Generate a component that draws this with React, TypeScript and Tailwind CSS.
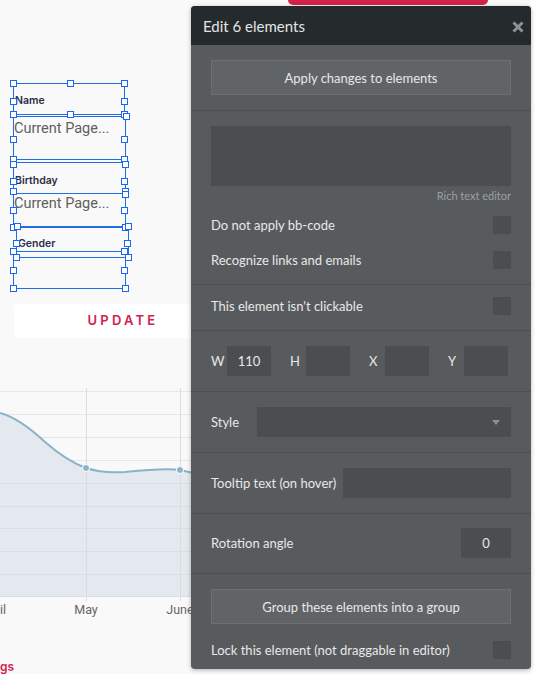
import React from 'react';

const handles: [number, number][] = [
  [13, 83], [70, 83], [124, 83],
  [13, 101], [124, 101],
  [13, 114], [70, 114], [124, 114], [126, 116],
  [13, 139], [124, 139],
  [13, 159], [124, 159], [13, 164], [125, 164],
  [13, 181], [124, 181],
  [13, 191], [125, 191], [125, 194],
  [13, 210], [124, 210],
  [13, 227], [125, 227], [17, 226], [128, 226],
  [16, 243], [127, 243],
  [13, 251], [124, 251], [16, 257], [128, 257],
  [13, 270], [124, 270],
  [13, 288], [125, 288],
];

const boxes: [number, number, number, number][] = [
  [13, 83, 124, 114],
  [13, 116, 125, 159],
  [13, 162, 125, 193],
  [13, 193, 125, 227],
  [16, 226, 128, 257],
  [13, 251, 125, 288],
];

const gridY = [391, 414, 437, 460, 483, 506, 528, 551, 574];

function Check() {
  return <div className="w-[18px] h-[18px] bg-[#4a4e51] shrink-0" />;
}

function Field({ className = '', children }: { className?: string; children?: React.ReactNode }) {
  return (
    <div className={`h-[30px] bg-[#4a4e51] flex items-center justify-center text-[13px] text-[#e8e8e8] ${className}`}>
      {children}
    </div>
  );
}

function EditPanel() {
  const section = 'px-5 border-b border-[#4c5053]';
  return (
    <div className="absolute left-[191px] top-[6px] w-[340px] h-[663px] rounded-[4px] bg-[#575b5e] shadow-[0_1px_4px_rgba(0,0,0,0.3)] overflow-hidden font-['Lato',sans-serif] text-[13px] leading-[18px] text-[#e8e8e8]">
      <div className="h-[39px] bg-[#252a2d] flex items-center justify-between pl-3 pr-[7px]">
        <span className="text-[15px] text-[#e4e4e4]">Edit 6 elements</span>
        <svg width="12" height="12" viewBox="0 0 12 12" className="mb-[-2px]">
          <path d="M1.5 1.5 L10.5 10.5 M10.5 1.5 L1.5 10.5" stroke="#8b9194" strokeWidth="3" />
        </svg>
      </div>

      <div className={`${section} pt-[15px] pb-[15px]`}>
        <div className="h-[35px] bg-[#606467] border border-[#6c7073] flex items-center justify-center">
          Apply changes to elements
        </div>
      </div>

      <div className={`${section} pt-[15px] pb-[15px]`}>
        <div className="h-[60px] bg-[#4a4e51]" />
        <div className="text-right text-[11px] leading-[14px] mt-[3px] text-[#9ca0a3]">Rich text editor</div>
        <div className="flex items-center justify-between mt-[13px]">
          <span>Do not apply bb-code</span>
          <Check />
        </div>
        <div className="flex items-center justify-between mt-[17px]">
          <span>Recognize links and emails</span>
          <Check />
        </div>
      </div>

      <div className={`${section} pt-[12px] pb-[15px]`}>
        <div className="flex items-center justify-between">
          <span>This element isn't clickable</span>
          <Check />
        </div>
      </div>

      <div className={`${section} py-[15px]`}>
        <div className="flex items-center gap-[19px]">
          {['W', 'H', 'X', 'Y'].map((l) => (
            <div key={l} className="flex items-center">
              <span className="w-[16px]">{l}</span>
              <Field className="w-[44px]">{l === 'W' ? '110' : ''}</Field>
            </div>
          ))}
        </div>
      </div>

      <div className={`${section} py-[15px]`}>
        <div className="flex items-center">
          <span className="w-[46px]">Style</span>
          <div className="flex-1 h-[30px] bg-[#4a4e51] flex items-center justify-end pr-[11px]">
            <svg width="8" height="5" viewBox="0 0 8 5">
              <path d="M0 0 L8 0 L4 5 Z" fill="#8c9093" />
            </svg>
          </div>
        </div>
      </div>

      <div className={`${section} pt-[15px] pb-[15px]`}>
        <div className="flex items-center justify-between">
          <span>Tooltip text (on hover)</span>
          <Field className="w-[168px]" />
        </div>
      </div>

      <div className={`${section} pt-[14px] pb-[15px]`}>
        <div className="flex items-center justify-between">
          <span>Rotation angle</span>
          <Field className="w-[50px]">0</Field>
        </div>
      </div>

      <div className="px-5 pt-[15px]">
        <div className="h-[35px] bg-[#606467] border border-[#6c7073] flex items-center justify-center">
          Group these elements into a group
        </div>
        <div className="flex items-center justify-between mt-[17px]">
          <span>Lock this element (not draggable in editor)</span>
          <Check />
        </div>
      </div>
    </div>
  );
}

export default function App() {
  return (
    <div className="relative w-[549px] h-[674px] overflow-hidden bg-white">
      <div className="w-[531px] h-[674px] bg-[#f9f9f9]">
        {/* canvas with selected elements */}
        <div className="relative h-[304px]">
          <div className="ml-[288px] w-[200px] h-[5px] rounded-b-[6px] bg-[#d3234b]" />

          <div className="absolute left-[15px] top-[94px] text-[10.5px] font-semibold text-[#2b2e45] font-['Inter',sans-serif] leading-[14px]">Name</div>
          <div className="absolute left-[14px] top-[119px] text-[14.5px] text-[#5f5f5f] font-['Roboto',sans-serif] leading-[20px]">Current Page...</div>
          <div className="absolute left-[15px] top-[174px] text-[10.5px] font-semibold text-[#2b2e45] font-['Inter',sans-serif] leading-[14px]">Birthday</div>
          <div className="absolute left-[14px] top-[194px] text-[14.5px] text-[#5f5f5f] font-['Roboto',sans-serif] leading-[20px]">Current Page...</div>
          <div className="absolute left-[18px] top-[237px] text-[10.5px] font-semibold text-[#2b2e45] font-['Inter',sans-serif] leading-[14px]">Gender</div>

          {boxes.map(([x1, y1, x2, y2], i) => (
            <div
              key={i}
              className="absolute border border-[#1f6fe3]"
              style={{ left: x1, top: y1, width: x2 - x1 + 1, height: y2 - y1 + 1 }}
            />
          ))}
          {handles.map(([cx, cy], i) => (
            <div
              key={i}
              className="absolute w-[7px] h-[7px] bg-white border border-[#1a66f0]"
              style={{ left: cx - 3, top: cy - 3 }}
            />
          ))}
        </div>

        <div className="ml-[14px] w-[218px] h-[34px] bg-white rounded-[4px] flex items-center justify-center">
          <span className="text-[13px] font-semibold tracking-[3.2px] text-[#d3234b] font-['Inter',sans-serif]">UPDATE</span>
        </div>

        {/* chart */}
        <svg width="200" height="290" viewBox="0 338 200 290" className="block">
          {gridY.map((y) => (
            <line key={y} x1="0" x2="200" y1={y + 0.5} y2={y + 0.5} stroke="#e6e6e6" strokeWidth="1" />
          ))}
          <path
            d="M0 413 C15 417 30 428 45 442 C60 455 72 463 86 468 C98 472 110 473 125 472 C145 470 165 468 180 470 C185 471 190 472 200 475 L200 596 L0 596 Z"
            fill="#e4e9ef"
          />
          {gridY.slice(4).map((y) => (
            <line key={'f' + y} x1="0" x2="200" y1={y + 0.5} y2={y + 0.5} stroke="#d9dee4" strokeWidth="1" />
          ))}
          <line x1="86.5" x2="86.5" y1="388" y2="601" stroke="#dcdcdc" strokeWidth="1" />
          <line x1="180.5" x2="180.5" y1="388" y2="601" stroke="#dcdcdc" strokeWidth="1" />
          <line x1="0" x2="200" y1="596.5" y2="596.5" stroke="#dcdcdc" strokeWidth="1" />
          <path
            d="M0 413 C15 417 30 428 45 442 C60 455 72 463 86 468 C98 472 110 473 125 472 C145 470 165 468 180 470 C185 471 190 472 200 475"
            fill="none"
            stroke="#8bb3c7"
            strokeWidth="2"
          />
          <circle cx="86" cy="468" r="3.5" fill="#8bb3c7" stroke="#ffffff" strokeWidth="1" />
          <circle cx="180" cy="470" r="3.5" fill="#8bb3c7" stroke="#ffffff" strokeWidth="1" />
          <g fontFamily="Roboto, sans-serif" fontSize="12.5" fill="#666666">
            <text x="0" y="614">il</text>
            <text x="86" y="614" textAnchor="middle">May</text>
            <text x="180" y="614" textAnchor="middle">June</text>
          </g>
        </svg>

        <div className="mt-[32px] text-[12px] font-semibold text-[#d3234b] font-['Inter',sans-serif] leading-[14px]">gs</div>
      </div>

      <EditPanel />
    </div>
  );
}
